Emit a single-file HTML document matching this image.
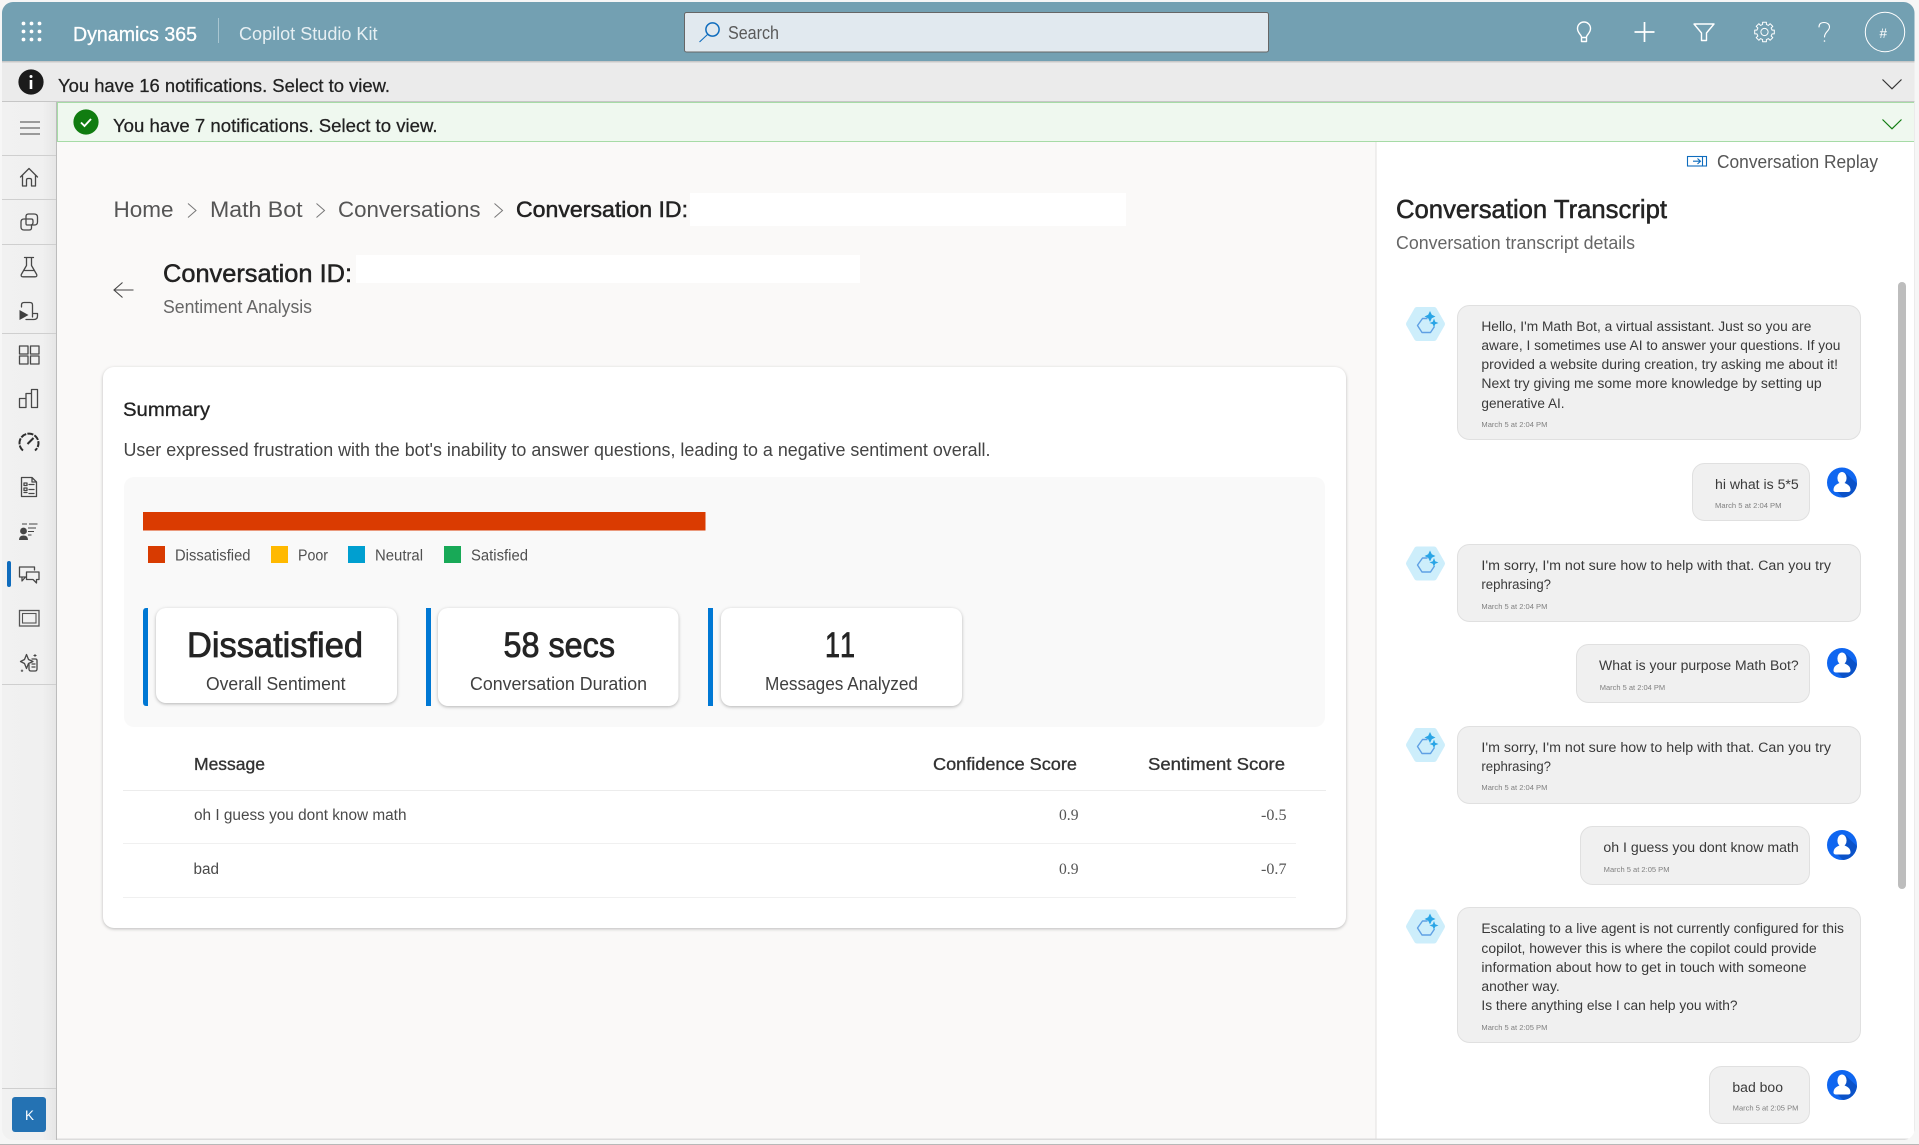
<!DOCTYPE html>
<html lang="en">
<head>
<meta charset="utf-8">
<title>Conversation Transcript</title>
<style>
html,body{margin:0;padding:0;width:1919px;height:1145px;overflow:hidden;background:#f6f6f6}
svg{display:block;position:absolute;left:0;top:0}
text{font-family:"Liberation Sans",sans-serif;white-space:pre}
.ic{fill:none;stroke:#484848;stroke-width:1.3;stroke-linecap:round;stroke-linejoin:round}
.hw{fill:none;stroke:#fff;stroke-width:1.4;stroke-linecap:round;stroke-linejoin:round}
.b{fill:#f0f0f0;stroke:#e0e0e0;stroke-width:1}
.m{font-size:13.5px;fill:#3a3a3a}
.t{font-size:7.5px;fill:#808080}
</style>
</head>
<body>
<svg width="1919" height="1145" viewBox="0 0 1919 1145" xmlns="http://www.w3.org/2000/svg">
<defs>
<clipPath id="app"><rect x="2" y="2" width="1912.5" height="1138" rx="11"/></clipPath>
<linearGradient id="side" x1="0" x2="1" y1="0" y2="0"><stop offset="0" stop-color="#f1f1f1"/><stop offset=".75" stop-color="#f0f0f0"/><stop offset="1" stop-color="#e6e6e6"/></linearGradient>
<g id="bot">
<path d="M1409 324 L1417 310 H1434 L1442 324 L1434 338 H1417 Z" fill="#cdeefb" stroke="#cdeefb" stroke-width="6" stroke-linejoin="round"/>
<path d="M1427.5 318.5 L1422.5 318.5 L1417.5 325.5 L1422 332.5 H1430.5 L1434.5 326.5" fill="none" stroke="#5fa0e4" stroke-width="1.4" stroke-linejoin="round"/>
<path d="M1430 311 L1431.8 314.7 L1435.5 316.5 L1431.8 318.3 L1430 322 L1428.2 318.3 L1424.5 316.5 L1428.2 314.7 Z" fill="#29a5e6"/>
<path d="M1434 318.5 L1435.2 321.8 L1438.5 323 L1435.2 324.2 L1434 327.5 L1432.8 324.2 L1429.5 323 L1432.8 321.8 Z" fill="#29a5e6"/>
</g>
<g id="usr">
<circle cx="0" cy="0" r="15" fill="#0f66f0"/>
<path d="M3 -10 L15 1 A15 15 0 0 1 1 15 L-6 8 Z" fill="#0b52c8"/>
<ellipse cx="0" cy="-4.5" rx="4.6" ry="6" fill="#fff"/>
<path d="M-8.5 7.5 C-8.5 3 -5 1.5 -2.5 0.5 H2.5 C5 1.5 8.5 3 8.5 7.5 C8.5 9 7 9.5 6 9.5 H-6 C-7 9.5 -8.5 9 -8.5 7.5 Z" fill="#fff"/>
</g>
</defs>

<rect width="1919" height="1145" fill="#f6f6f6"/>
<rect x="0" y="1144" width="1919" height="1" fill="#b8b8b8"/>

<g clip-path="url(#app)">
<rect x="2" y="2" width="1913" height="1138" fill="#faf9f8"/>
<rect x="2" y="2" width="1913" height="60" fill="#73a0b2"/>
<rect x="2" y="61" width="1913" height="1.5" fill="#c8c8c8"/>
<rect x="2" y="62.5" width="1913" height="39.5" fill="#ebebeb"/>
<rect x="2" y="101" width="1913" height="1" fill="#c6c6c6"/>
<rect x="2" y="102" width="54" height="1038" fill="url(#side)"/>
<rect x="56" y="102" width="1" height="1038" fill="#bcbcbc"/>
<rect x="57" y="102" width="1858" height="39.5" fill="#eff8ef"/>
<rect x="57" y="102" width="1858" height="1" fill="#a6dba6"/>
<rect x="57" y="141" width="1858" height="1" fill="#a6dba6"/>
<rect x="57" y="102" width="1" height="40" fill="#a6dba6"/>
<rect x="1376" y="142" width="540" height="998" fill="#fff"/>
<rect x="1375.5" y="142" width="1" height="998" fill="#e3e1df"/>
<rect x="57" y="1138.5" width="1858" height="1.5" fill="#dcdcdc"/>
<rect x="1914" y="102" width="1" height="1038" fill="#e0e0e0"/>
<g fill="#cfcfcf">
<rect x="2" y="155" width="54" height="1"/><rect x="2" y="199" width="54" height="1"/>
<rect x="2" y="244" width="54" height="1"/><rect x="2" y="333" width="54" height="1"/>
<rect x="2" y="684" width="54" height="1"/><rect x="2" y="1088" width="54" height="1"/>
</g>
</g>

<g fill="#fff">
<circle cx="23.5" cy="23.5" r="1.9"/><circle cx="31.5" cy="23.5" r="1.9"/><circle cx="39.5" cy="23.5" r="1.9"/>
<circle cx="23.5" cy="31.5" r="1.9"/><circle cx="31.5" cy="31.5" r="1.9"/><circle cx="39.5" cy="31.5" r="1.9"/>
<circle cx="23.5" cy="39.5" r="1.9"/><circle cx="31.5" cy="39.5" r="1.9"/><circle cx="39.5" cy="39.5" r="1.9"/>
</g>
<text x="73" y="41" font-size="20" fill="#fff" stroke="#fff" stroke-width=".3" textLength="124" lengthAdjust="spacingAndGlyphs">Dynamics 365</text>
<rect x="218" y="18" width="1" height="25" fill="#a9c6d1"/>
<text x="239" y="40" font-size="18" fill="#e6eff3" textLength="138.5" lengthAdjust="spacingAndGlyphs">Copilot Studio Kit</text>

<rect x="684.5" y="12.5" width="584" height="39.5" rx="2" fill="#e1e9ef" stroke="#666" stroke-width="1"/>
<circle cx="712.5" cy="29.5" r="6.6" fill="none" stroke="#0f6cbd" stroke-width="1.5"/>
<path d="M707.5 34.5 L699.5 42" stroke="#0f6cbd" stroke-width="1.1" fill="none"/>
<text x="728" y="39" font-size="18" fill="#5a5a5a" textLength="51" lengthAdjust="spacingAndGlyphs">Search</text>

<path class="hw" d="M1581.5 41.5 H1586.5 V37 C1586.5 35 1590.5 33 1590.5 28.5 A6.5 6.5 0 0 0 1577.5 28.5 C1577.5 33 1581.5 35 1581.5 37 Z M1581.5 37.5 H1586.5"/>
<path d="M1644.5 22 V42 M1634.5 32 H1654.5" stroke="#fff" stroke-width="1.7" fill="none"/>
<path class="hw" d="M1694 24 H1714 L1706.5 33 V40.5 H1701.5 V33 Z"/>
<path class="hw" style="stroke-width:1" transform="translate(1764.5,32)" d="M9.8 -1.9 L9.8 1.9 L7.6 1.9 L6.6 4 L8.3 5.6 L5.6 8.3 L4 6.6 L1.9 7.6 L1.9 9.8 L-1.9 9.8 L-1.9 7.6 L-4 6.6 L-5.6 8.3 L-8.3 5.6 L-6.6 4 L-7.6 1.9 L-9.8 1.9 L-9.8 -1.9 L-7.6 -1.9 L-6.6 -4 L-8.3 -5.6 L-5.6 -8.3 L-4 -6.6 L-1.9 -7.6 L-1.9 -9.8 L1.9 -9.8 L1.9 -7.6 L4 -6.6 L5.6 -8.3 L8.3 -5.6 L6.6 -4 L7.6 -1.9 Z"/>
<circle cx="1764.5" cy="32" r="3.6" class="hw" style="stroke-width:1"/>
<path class="hw" d="M1819 27 C1819 24 1821 22.5 1824 22.5 C1827.5 22.5 1829.5 24.5 1829.5 27 C1829.5 31 1824.5 32 1824.5 37" style="stroke-width:1.1"/>
<circle cx="1824.5" cy="41" r=".8" fill="#fff"/>
<circle cx="1885" cy="32" r="19.7" fill="none" stroke="#fff" stroke-width="1"/>
<text x="1879.5" y="38" font-size="13.5" fill="#fff">#</text>

<circle cx="31" cy="82" r="12.6" fill="#1b1b1b"/>
<circle cx="31" cy="76.5" r="1.5" fill="#fff"/>
<rect x="29.7" y="80" width="2.6" height="9" fill="#fff"/>
<text x="58" y="92" font-size="18" fill="#222" stroke="#222" stroke-width=".25" textLength="332" lengthAdjust="spacingAndGlyphs">You have 16 notifications. Select to view.</text>
<path d="M1882.5 79.5 L1892 88.8 L1901.5 79.5" fill="none" stroke="#333" stroke-width="1.2"/>
<circle cx="86" cy="122" r="12.6" fill="#107c10"/>
<path d="M81 122.5 L84.5 126 L91 119" fill="none" stroke="#fff" stroke-width="1.9"/>
<text x="113" y="132" font-size="18" fill="#222" stroke="#222" stroke-width=".25" textLength="324.5" lengthAdjust="spacingAndGlyphs">You have 7 notifications. Select to view.</text>
<path d="M1882.5 119.5 L1892 128.8 L1901.5 119.5" fill="none" stroke="#107c10" stroke-width="1.2"/>

<path d="M20 128 H40 M20 122 H40 M20 134 H40" stroke="#444" stroke-width="1" fill="none"/>
<path class="ic" d="M20.5 177 L29 168.5 L37.5 177 M22.5 175.5 V186 H26.5 V180 Q26.5 178.5 28 178.5 H30 Q31.5 178.5 31.5 180 V186 H35.5 V175.5"/>
<path class="ic" d="M26 219 V216.5 Q26 214 28.5 214 H34 Q37.5 214 37.5 217 V222 Q37.5 225 34.5 225 H31.5 V228 Q31.5 230 29 230 H24 Q21 230 21 227 V222 Q21 219 24 219 H31.5 Q33 219 33 221 V222.5 Q33 224.5 31 225 H27 Q26 225 26 223.5 V219 Z"/>
<path class="ic" d="M24.5 257.5 H33.5 M26.5 257.5 V265.5 L21.3 274.5 Q20.6 276.8 23 276.8 H35 Q37.4 276.8 36.7 274.5 L31.5 265.5 V257.5 M23.8 270.5 H34.2"/>
<path class="ic" d="M21.5 307 V305 Q21.5 302.5 24 302.5 H30 Q32.5 302.5 32.5 305 V317 M32.5 313.5 H37.5 V316 Q37.5 319.5 34 319.5 H26"/>
<path d="M19.5 310 V320 L28.5 315 Z" fill="#3f3f3f"/>
<g class="ic"><rect x="19.5" y="346" width="8.5" height="8"/><rect x="30.5" y="346" width="8.5" height="8"/><rect x="19.5" y="356" width="8.5" height="8"/><rect x="30.5" y="356" width="8.5" height="8"/></g>
<path class="ic" d="M19.5 407.5 V398.5 H26 V407.5 Z M26 407.5 V393.5 H31.5 V407.5 M31.5 407.5 V389.5 H37.5 V407.5 Z"/>
<path d="M23 450.5 A9.5 9.5 0 1 1 35 450.5" fill="none" stroke="#2e2e2e" stroke-width="2" stroke-dasharray="6 1.2"/>
<path d="M27.5 444 L33.5 438" stroke="#2e2e2e" stroke-width="2" fill="none"/>
<path class="ic" d="M21.5 477.5 H32 L36.5 482 V496.5 H21.5 Z M32 477.5 V482 H36.5 M24 483 H27 V485.5 H24 Z M24 488 H27 V490.5 H24 Z M24 492.5 H27 M29 484.5 H34 M29 489.5 H34 M29 493.5 H34"/>
<path d="M22 524 H27 M29 524 H37.5 M28 528 H36 M28 531.5 H34 M28 535 H31.5" stroke="#444" stroke-width="1.1" fill="none"/>
<circle cx="23.5" cy="531" r="3.4" fill="#444"/>
<path d="M19 540 Q19 535.5 23.5 535.5 Q28 535.5 28 540 Z" fill="#444"/>
<rect x="7" y="561" width="4" height="26" rx="2" fill="#0f6cbd"/>
<path class="ic" d="M19.5 567 H34.5 V570 M26 577 H19.5 V567 M22 577 V581 L25.5 577"/>
<path class="ic" d="M26.5 572 H39 V579.5 H36.5 V583 L33 579.5 H26.5 Z"/>
<rect x="19.5" y="610.5" width="19.5" height="15.5" fill="none" stroke="#555" stroke-width="1.3"/>
<rect x="22.5" y="613.5" width="13.5" height="9.5" fill="none" stroke="#555" stroke-width="1.1"/>
<path class="ic" d="M26.5 654.5 L28.5 659.5 L33 661.5 L28.5 663.5 L26.5 668.5 L24.5 663.5 L20.5 661.5 L24.5 659.5 Z"/>
<path class="ic" d="M29 664.5 V669 Q29 671 31 671 H35 Q37 671 37 669 V660.5 Q37 659 35.5 659 H32 M32 664 H35 M32 667 H35"/>
<path d="M35 654 V657 M33.5 655.5 H36.5 M22 669.5 V672 M20.8 670.8 H23.2" stroke="#444" stroke-width=".9" fill="none"/>
<rect x="12" y="1097" width="34" height="35" rx="3" fill="#2472b3"/>
<text x="25" y="1120" font-size="13.5" fill="#fff">K</text>

<text x="113.5" y="217" font-size="22" fill="#555" textLength="60" lengthAdjust="spacingAndGlyphs">Home</text>
<path d="M188 203.5 L196 210.5 L188 217.5" fill="none" stroke="#777" stroke-width="1"/>
<text x="210" y="217" font-size="22" fill="#555" textLength="92.5" lengthAdjust="spacingAndGlyphs">Math Bot</text>
<path d="M316.5 203.5 L324.5 210.5 L316.5 217.5" fill="none" stroke="#777" stroke-width="1"/>
<text x="338" y="217" font-size="22" fill="#555" textLength="142.5" lengthAdjust="spacingAndGlyphs">Conversations</text>
<path d="M494.5 203.5 L502.5 210.5 L494.5 217.5" fill="none" stroke="#777" stroke-width="1"/>
<text x="516" y="217" font-size="22" fill="#222" stroke="#222" stroke-width=".5" textLength="172" lengthAdjust="spacingAndGlyphs">Conversation ID:</text>
<rect x="690" y="193" width="436" height="33" fill="#fff"/>

<path d="M133.5 290 H114.5 M122.5 282.5 L114 290 L122.5 297.5" fill="none" stroke="#444" stroke-width="1.1"/>
<text x="163" y="282" font-size="25" fill="#222" stroke="#222" stroke-width=".5" textLength="189" lengthAdjust="spacingAndGlyphs">Conversation ID:</text>
<rect x="356" y="255" width="504" height="28" fill="#fff"/>
<text x="163" y="313" font-size="18" fill="#666" textLength="149" lengthAdjust="spacingAndGlyphs">Sentiment Analysis</text>

<rect x="103" y="367" width="1243" height="561" rx="11" fill="#fff" style="filter:drop-shadow(0 1.5px 1.5px rgba(0,0,0,.25))"/>
<text x="123" y="416" font-size="19.5" fill="#222" stroke="#222" stroke-width=".3" textLength="87" lengthAdjust="spacingAndGlyphs">Summary</text>
<text x="123.5" y="456" font-size="18" fill="#444" textLength="867" lengthAdjust="spacingAndGlyphs">User expressed frustration with the bot's inability to answer questions, leading to a negative sentiment overall.</text>
<rect x="124" y="477" width="1201" height="250" rx="10" fill="#f9f9f9"/>
<rect x="143" y="512" width="562.5" height="18.5" fill="#da3b01"/>
<rect x="148" y="546" width="17" height="17" fill="#d83b01"/>
<rect x="271" y="546" width="17" height="17" fill="#ffb900"/>
<rect x="348" y="546" width="17" height="17" fill="#009fd0"/>
<rect x="444" y="546" width="17" height="17" fill="#18a957"/>
<g font-size="15.5" fill="#505050">
<text x="175" y="560.5" textLength="75.5" lengthAdjust="spacingAndGlyphs">Dissatisfied</text>
<text x="298" y="560.5" textLength="30" lengthAdjust="spacingAndGlyphs">Poor</text>
<text x="375" y="560.5" textLength="48" lengthAdjust="spacingAndGlyphs">Neutral</text>
<text x="471" y="560.5" textLength="57" lengthAdjust="spacingAndGlyphs">Satisfied</text>
</g>

<path d="M148 608 V706 H146 Q143 706 143 702 V612 Q143 608 146 608 Z" fill="#0078d4"/>
<rect x="426" y="608" width="5" height="98" fill="#0078d4"/>
<rect x="708" y="608" width="5" height="98" fill="#0078d4"/>
<g fill="#fff" style="filter:drop-shadow(0 1.5px 1.5px rgba(0,0,0,.28))">
<rect x="156" y="608" width="241" height="95" rx="10"/>
<rect x="438" y="608" width="240.5" height="98" rx="10"/>
<rect x="721" y="608" width="241" height="98" rx="10"/>
</g>
<g font-size="35" fill="#242424" stroke="#242424" stroke-width=".8" style="font-kerning:none">
<text x="187" y="657" textLength="176" lengthAdjust="spacingAndGlyphs">Dissatisfied</text>
<text x="503.5" y="657" textLength="111.5" lengthAdjust="spacingAndGlyphs">58 secs</text>
<text x="825" y="657" textLength="30" lengthAdjust="spacingAndGlyphs">11</text>
</g>
<g font-size="18" fill="#404040">
<text x="206" y="690" textLength="139.5" lengthAdjust="spacingAndGlyphs">Overall Sentiment</text>
<text x="470" y="690" textLength="177" lengthAdjust="spacingAndGlyphs">Conversation Duration</text>
<text x="765" y="690" textLength="153" lengthAdjust="spacingAndGlyphs">Messages Analyzed</text>
</g>

<g font-size="17.5" fill="#333" stroke="#333" stroke-width=".35">
<text x="194" y="770" textLength="71" lengthAdjust="spacingAndGlyphs">Message</text>
<text x="933" y="770" textLength="144" lengthAdjust="spacingAndGlyphs">Confidence Score</text>
<text x="1148" y="770" textLength="137" lengthAdjust="spacingAndGlyphs">Sentiment Score</text>
</g>
<rect x="123" y="790" width="1203" height="1" fill="#ececec"/>
<rect x="123" y="843" width="1173" height="1" fill="#f0f0f0"/>
<rect x="123" y="897" width="1173" height="1" fill="#f0f0f0"/>
<g font-size="15.5" fill="#4a4a4a">
<text x="194" y="820" textLength="212.5" lengthAdjust="spacingAndGlyphs">oh I guess you dont know math</text>
<text x="193.5" y="874" textLength="25.5" lengthAdjust="spacingAndGlyphs">bad</text>
</g>
<g font-size="15.5" fill="#555">
<text x="1059" y="820" style="font-family:'Liberation Serif',serif" textLength="19.5" lengthAdjust="spacingAndGlyphs">0.9</text>
<text x="1261" y="820" style="font-family:'Liberation Serif',serif" textLength="25.5" lengthAdjust="spacingAndGlyphs">-0.5</text>
<text x="1059" y="874" style="font-family:'Liberation Serif',serif" textLength="19.5" lengthAdjust="spacingAndGlyphs">0.9</text>
<text x="1261" y="874" style="font-family:'Liberation Serif',serif" textLength="25.5" lengthAdjust="spacingAndGlyphs">-0.7</text>
</g>

<rect x="1687.5" y="156.5" width="19" height="9.5" fill="none" stroke="#0f6cbd" stroke-width="1.1"/>
<path d="M1693 161.2 H1700 M1697.5 158.5 L1700.5 161.2 L1697.5 164 M1702.5 157 V166" fill="none" stroke="#0f6cbd" stroke-width="1.1"/>
<text x="1717" y="168" font-size="18" fill="#555" textLength="161" lengthAdjust="spacingAndGlyphs">Conversation Replay</text>
<text x="1396" y="218" font-size="26" fill="#242424" stroke="#242424" stroke-width=".55" textLength="271" lengthAdjust="spacingAndGlyphs">Conversation Transcript</text>
<text x="1396" y="249" font-size="18" fill="#666" textLength="239" lengthAdjust="spacingAndGlyphs">Conversation transcript details</text>
<rect x="1898" y="282" width="8" height="607" rx="4" fill="#bdbdbd"/>

<use href="#bot"/>
<rect class="b" x="1457.5" y="305.5" width="403" height="134" rx="12"/>
<text class="m" x="1481.4" y="331" textLength="330" lengthAdjust="spacingAndGlyphs">Hello, I'm Math Bot, a virtual assistant. Just so you are</text>
<text class="m" x="1481.4" y="350" textLength="359" lengthAdjust="spacingAndGlyphs">aware, I sometimes use AI to answer your questions. If you</text>
<text class="m" x="1481.4" y="369" textLength="356.6" lengthAdjust="spacingAndGlyphs">provided a website during creation, try asking me about it!</text>
<text class="m" x="1481.4" y="388" textLength="340.3" lengthAdjust="spacingAndGlyphs">Next try giving me some more knowledge by setting up</text>
<text class="m" x="1481.4" y="408" textLength="83.2" lengthAdjust="spacingAndGlyphs">generative AI.</text>
<text class="t" x="1481.4" y="427" textLength="66" lengthAdjust="spacingAndGlyphs">March 5 at 2:04 PM</text>

<rect class="b" x="1692.5" y="463.5" width="117" height="57" rx="12"/>
<text class="m" x="1715" y="489" textLength="83.7" lengthAdjust="spacingAndGlyphs">hi what is 5*5</text>
<text class="t" x="1715" y="508" textLength="66.5" lengthAdjust="spacingAndGlyphs">March 5 at 2:04 PM</text>
<use href="#usr" x="1842" y="482.5"/>

<use href="#bot" y="239.5"/>
<rect class="b" x="1457.5" y="544.5" width="403" height="77" rx="12"/>
<text class="m" x="1481.4" y="570" textLength="349.6" lengthAdjust="spacingAndGlyphs">I'm sorry, I'm not sure how to help with that. Can you try</text>
<text class="m" x="1481.4" y="589" textLength="69.6" lengthAdjust="spacingAndGlyphs">rephrasing?</text>
<text class="t" x="1481.4" y="609" textLength="66" lengthAdjust="spacingAndGlyphs">March 5 at 2:04 PM</text>

<rect class="b" x="1576.5" y="644.5" width="233" height="58" rx="12"/>
<text class="m" x="1599" y="670" textLength="199.7" lengthAdjust="spacingAndGlyphs">What is your purpose Math Bot?</text>
<text class="t" x="1599.7" y="690" textLength="65.5" lengthAdjust="spacingAndGlyphs">March 5 at 2:04 PM</text>
<use href="#usr" x="1842" y="663"/>

<use href="#bot" y="421"/>
<rect class="b" x="1457.5" y="726.5" width="403" height="77" rx="12"/>
<text class="m" x="1481.4" y="752" textLength="349.6" lengthAdjust="spacingAndGlyphs">I'm sorry, I'm not sure how to help with that. Can you try</text>
<text class="m" x="1481.4" y="771" textLength="69.6" lengthAdjust="spacingAndGlyphs">rephrasing?</text>
<text class="t" x="1481.4" y="790" textLength="66" lengthAdjust="spacingAndGlyphs">March 5 at 2:04 PM</text>

<rect class="b" x="1580.5" y="826.5" width="229" height="58" rx="12"/>
<text class="m" x="1603.4" y="852" textLength="195.3" lengthAdjust="spacingAndGlyphs">oh I guess you dont know math</text>
<text class="t" x="1603.7" y="872" textLength="65.8" lengthAdjust="spacingAndGlyphs">March 5 at 2:05 PM</text>
<use href="#usr" x="1842" y="845"/>

<use href="#bot" y="602.5"/>
<rect class="b" x="1457.5" y="907.5" width="403" height="135" rx="12"/>
<text class="m" x="1481.4" y="933" textLength="362.6" lengthAdjust="spacingAndGlyphs">Escalating to a live agent is not currently configured for this</text>
<text class="m" x="1481.4" y="953" textLength="335.2" lengthAdjust="spacingAndGlyphs">copilot, however this is where the copilot could provide</text>
<text class="m" x="1481.4" y="972" textLength="325.2" lengthAdjust="spacingAndGlyphs">information about how to get in touch with someone</text>
<text class="m" x="1481.4" y="991" textLength="78.4" lengthAdjust="spacingAndGlyphs">another way.</text>
<text class="m" x="1481.4" y="1010" textLength="256.1" lengthAdjust="spacingAndGlyphs">Is there anything else I can help you with?</text>
<text class="t" x="1481.4" y="1030" textLength="66" lengthAdjust="spacingAndGlyphs">March 5 at 2:05 PM</text>

<rect class="b" x="1709.5" y="1066.5" width="100" height="57" rx="12"/>
<text class="m" x="1732.4" y="1092" textLength="50.6" lengthAdjust="spacingAndGlyphs">bad boo</text>
<text class="t" x="1732.7" y="1110.7" textLength="65.7" lengthAdjust="spacingAndGlyphs">March 5 at 2:05 PM</text>
<use href="#usr" x="1842" y="1085"/>
</svg>
</body>
</html>
